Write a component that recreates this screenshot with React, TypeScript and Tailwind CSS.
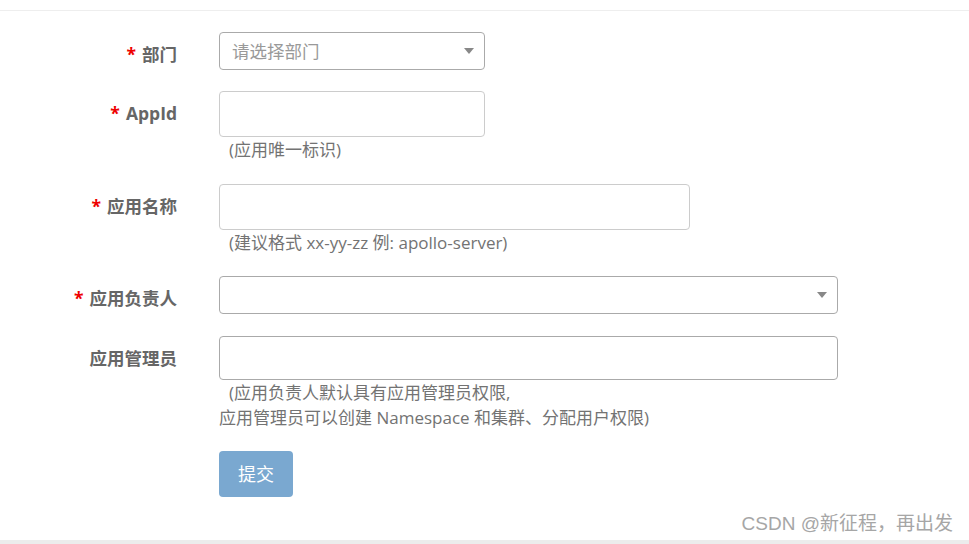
import React from "react";

const font = { fontFamily: '"Open Sans", "Noto Sans CJK SC", sans-serif' };

function Label({ text, required, h }: { text: string; required?: boolean; h: string }) {
  return (
    <div className={`flex w-[177px] shrink-0 items-center justify-end text-[17.5px] font-bold text-[#666] ${h}`}>
      {required && <span className="mr-[6px] text-[#e00]">*</span>}
      {text}
    </div>
  );
}

function Caret() {
  return (
    <span className="h-0 w-0 border-x-[5px] border-t-[6px] border-x-transparent border-t-[#888]" />
  );
}

export default function App() {
  return (
    <div style={font} className="relative h-[544px] w-[969px] overflow-hidden bg-white">
      <div className="mt-[10px] border-t border-[#eeeeee]" />

      <div className="pt-[21px]">
        {/* 部门 */}
        <div className="flex">
          <Label text="部门" required h="h-[38px] pt-[6px]" />
          <div className="ml-[42px] flex h-[38px] w-[266px] items-center justify-between rounded-[4px] border border-[#aaa] pl-[12px] pr-[10px]">
            <span className="text-[17.5px] text-[#999]">请选择部门</span>
            <Caret />
          </div>
        </div>

        {/* AppId */}
        <div className="mt-[21px] flex">
          <Label text="AppId" required h="h-[46px] pb-[2px]" />
          <div className="ml-[42px]">
            <div className="h-[46px] w-[266px] rounded-[4px] border border-[#ccc]" />
            <div className="pl-[10px] text-[17px] leading-[25px] text-[#737373]">(应用唯一标识)</div>
          </div>
        </div>

        {/* 应用名称 */}
        <div className="mt-[22px] flex">
          <Label text="应用名称" required h="h-[46px] pb-[2px]" />
          <div className="ml-[42px]">
            <div className="h-[46px] w-[471px] rounded-[4px] border border-[#ccc]" />
            <div className="pl-[10px] text-[17px] leading-[25px] text-[#737373]">
              (建议格式 xx-yy-zz 例: apollo-server)
            </div>
          </div>
        </div>

        {/* 应用负责人 */}
        <div className="mt-[21px] flex">
          <Label text="应用负责人" required h="h-[38px] pt-[6px]" />
          <div className="ml-[42px] flex h-[38px] w-[619px] items-center justify-end rounded-[4px] border border-[#aaa] pr-[10px]">
            <Caret />
          </div>
        </div>

        {/* 应用管理员 */}
        <div className="mt-[22px] flex">
          <Label text="应用管理员" h="h-[44px]" />
          <div className="ml-[42px]">
            <div className="h-[44px] w-[619px] rounded-[4px] border border-[#aaa]" />
            <div className="text-[17px] leading-[25px] text-[#737373]">
              <span className="pl-[10px]">(应用负责人默认具有应用管理员权限,</span>
              <br />
              应用管理员可以创建 Namespace 和集群、分配用户权限)
            </div>
          </div>
        </div>

        {/* 提交 */}
        <div className="mt-[21px] flex">
          <div className="w-[177px] shrink-0" />
          <button className="ml-[42px] h-[46px] w-[74px] rounded-[4px] bg-[#7aa8d0] text-[18px] text-white">
            提交
          </button>
        </div>
      </div>

      <div
        style={{ fontFamily: '"Liberation Sans", "Noto Sans CJK SC", sans-serif' }}
        className="absolute bottom-[6px] right-[16px] text-[19px] text-[#a6a6a6]"
      >
        CSDN @新征程，再出发
      </div>
      <div className="absolute bottom-0 left-0 right-0 h-[4px] bg-[#ececec]" />
    </div>
  );
}
